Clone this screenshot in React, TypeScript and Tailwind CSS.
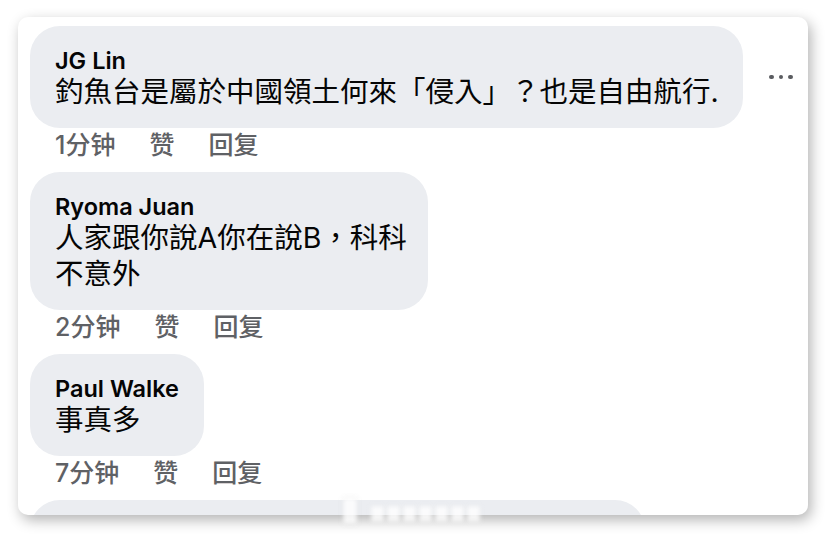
import React from 'react';

interface CommentItem {
  name: string;
  lines: string[];
  time: string;
  width: number;
}

const comments: CommentItem[] = [
  { name: 'JG Lin', lines: ['釣魚台是屬於中國領土何來「侵入」？也是自由航行.'], time: '1分钟', width: 713 },
  { name: 'Ryoma Juan', lines: ['人家跟你說A你在說B，科科', '不意外'], time: '2分钟', width: 398 },
  { name: 'Paul Walke', lines: ['事真多'], time: '7分钟', width: 174 },
];

const latin = "font-['Inter','Noto_Sans_CJK_TC',sans-serif]";

const Bubble: React.FC<{ item: CommentItem }> = ({ item }) => (
  <div
    className="rounded-[30px] bg-[#ebedf1] pl-[25px] pt-[22px] pb-[18px] text-[#050505]"
    style={{ width: item.width }}
  >
    <div className={`${latin} text-[23.5px] leading-[26px] font-semibold`}>{item.name}</div>
    {item.lines.map((line) => (
      <div key={line} className={`${latin} text-[28.5px] leading-[36px] whitespace-nowrap`}>
        {line}
      </div>
    ))}
  </div>
);

const Meta: React.FC<{ time: string }> = ({ time }) => (
  <div className="mt-[1px] flex h-[32px] items-center gap-[34px] pl-[25px] font-['Inter','Noto_Sans_CJK_SC',sans-serif] text-[25px] leading-[32px] font-medium text-[#5f6165]">
    <span>{time}</span>
    <span>赞</span>
    <span>回复</span>
  </div>
);

export default function App() {
  return (
    <div className="relative h-[534px] w-[826px] overflow-hidden bg-white pl-[18px] pt-[17px]">
      <div className="h-[498px] w-[790px] overflow-hidden rounded-[10px] bg-white pl-[12px] pt-[9px] shadow-[3px_5px_14px_rgba(0,0,0,0.3)]">
        {comments.map((c, i) => (
          <div key={c.name} className="mb-[11px]">
            <div className="flex items-center">
              <Bubble item={c} />
              {i === 0 && (
                <div className="ml-[26px] flex items-center gap-[5px]">
                  <span className="h-[4.5px] w-[4.5px] rounded-full bg-[#5a5c60]" />
                  <span className="h-[4.5px] w-[4.5px] rounded-full bg-[#5a5c60]" />
                  <span className="h-[4.5px] w-[4.5px] rounded-full bg-[#5a5c60]" />
                </div>
              )}
            </div>
            <Meta time={c.time} />
          </div>
        ))}
        <div className="h-[60px] w-[615px] rounded-[30px] bg-[#ebedf1]" />
      </div>

      {/* watermark */}
      <div className="absolute left-[343px] top-[498px] flex items-end blur-[2px] opacity-80">
        <div className="h-[26px] w-[14px] bg-white shadow-[0_0_3px_rgba(0,0,0,0.2)]" />
        <div className="ml-[14px] flex gap-[3px] pb-[2px]">
          {[0, 1, 2, 3, 4, 5, 6].map((k) => (
            <div key={k} className="h-[16px] w-[13px] bg-white shadow-[0_0_2px_rgba(0,0,0,0.15)]" />
          ))}
        </div>
      </div>
    </div>
  );
}
